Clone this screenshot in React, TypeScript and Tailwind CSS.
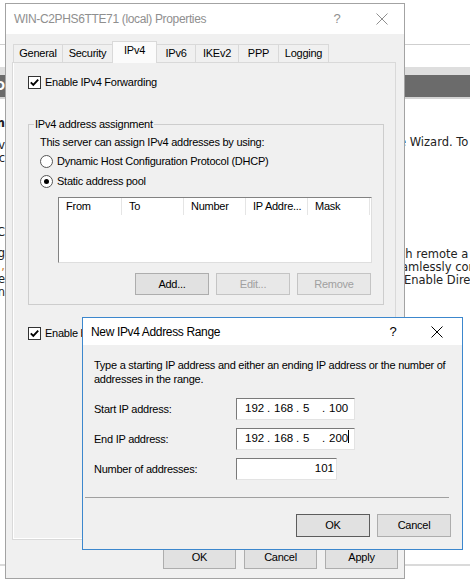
const ui = "font-['Liberation_Sans',Arial,sans-serif] text-[11px] tracking-[-0.25px]";

function CloseGlyph({ color }: { color: string }) {
  return (
    <svg width="12" height="12" viewBox="0 0 12 12" className="shrink-0">
      <path d="M0.5 0.5L11.5 11.5M11.5 0.5L0.5 11.5" stroke={color} strokeWidth="1" fill="none" />
    </svg>
  );
}

function CheckBox() {
  return (
    <span className="w-[13px] h-[13px] shrink-0 border border-[#333333] bg-white flex items-center justify-center">
      <svg width="9" height="9" viewBox="0 0 9 9">
        <path d="M0.8 4.3L3.3 6.8L8.2 1.6" stroke="#000" strokeWidth="1.9" fill="none" />
      </svg>
    </span>
  );
}

function Radio({ on }: { on?: boolean }) {
  return (
    <span className="w-[13px] h-[13px] shrink-0 rounded-full border border-[#555555] bg-white flex items-center justify-center">
      {on && <span className="w-[5px] h-[5px] rounded-full bg-black" />}
    </span>
  );
}

function Btn({ label, className }: { label: string; className: string }) {
  return <div className={`flex items-center justify-center border ${className}`}>{label}</div>;
}

function Backdrop() {
  return (
    <div className="font-['DejaVu_Sans',Verdana,sans-serif] text-[11.5px] tracking-normal text-[#222222]">
      <div className="h-[44px]" />
      <div className="h-px bg-[#cfcfcf]" />
      <div className="h-[22px]" />
      <div className="h-[8px] bg-[#dedede]" />
      <div className="h-[22px] bg-[#6b6b6b] flex justify-start">
        <span className="w-[5px] overflow-hidden flex justify-end text-white font-bold leading-[22px]">
          <span className="whitespace-nowrap">D</span>
        </span>
      </div>
      <div className="h-[2px] bg-[#d4d4d4]" />
      <div className="h-[465px] flex justify-between leading-[13px]">
        <div className="w-[5px] overflow-hidden">
          <div className="mt-[18px] flex justify-end font-bold text-[12px]">
            <span className="whitespace-nowrap">Welcom</span>
          </div>
          <div className="mt-[9px] flex justify-end">
            <span className="whitespace-nowrap">Alreadv</span>
          </div>
          <div className="flex justify-end">
            <span className="whitespace-nowrap">Servec</span>
          </div>
          <div className="mt-[61px] flex justify-end">
            <span className="whitespace-nowrap">DirectC</span>
          </div>
          <div className="mt-[8px] flex justify-end">
            <span className="whitespace-nowrap">Usingg</span>
          </div>
          <div className="flex justify-end text-[#d07a2a]">
            <span className="whitespace-nowrap">,</span>
          </div>
          <div className="flex justify-end">
            <span className="whitespace-nowrap">thee</span>
          </div>
          <div className="flex justify-end">
            <span className="whitespace-nowrap">whn</span>
          </div>
        </div>
        <div className="w-[65px] overflow-hidden whitespace-nowrap">
          <div className="mt-[37px] ml-[-6px]">e Wizard. To</div>
          <div className="mt-[99px] ml-[-6px]">ch remote a</div>
          <div className="ml-[-4px]">amlessly cor</div>
          <div className="ml-[-1px]">Enable Direc</div>
        </div>
      </div>
      <div className="h-[2px] bg-[#dadada]" />
    </div>
  );
}

function PropertiesDialog() {
  const tab = "h-[18px] -ml-px border border-b-0 border-[#d9d9d9] bg-[#f0f0f0] flex items-center justify-center";
  const cols = [
    { label: "From", w: "w-[63px]" },
    { label: "To", w: "w-[62px]" },
    { label: "Number", w: "w-[62px]" },
    { label: "IP Addre...", w: "w-[62px]" },
    { label: "Mask", w: "w-[62px]" },
  ];
  return (
    <div className={`absolute left-[5px] top-[3px] w-[400px] h-[576px] border border-[#a3a3a3] bg-[#f0f0f0] text-black ${ui}`}>
      <div className="h-[30px] bg-white flex items-center pl-[8px] pr-[16px]">
        <span className="text-[12px] tracking-[-0.35px] text-[#8f8f8f]">WIN-C2PHS6TTE71 (local) Properties</span>
        <div className="ml-auto flex items-center gap-[32px]">
          <span className="w-[14px] text-center text-[13px] text-[#8f8f8f]">?</span>
          <CloseGlyph color="#8f8f8f" />
        </div>
      </div>

      <div className="mt-[7px] ml-[7px] h-[21px] flex items-end">
        <div className="h-[18px] w-[50px] border border-b-0 border-[#d9d9d9] bg-[#f0f0f0] flex items-center justify-center">General</div>
        <div className={`${tab} w-[51px]`}>Security</div>
        <div className="relative z-10 h-[22px] w-[45px] -ml-px -mb-px pb-[5px] border border-b-0 border-[#d9d9d9] bg-[#fbfbfb] flex items-center justify-center">IPv4</div>
        <div className={`${tab} w-[40px]`}>IPv6</div>
        <div className={`${tab} w-[44px]`}>IKEv2</div>
        <div className={`${tab} w-[41px]`}>PPP</div>
        <div className={`${tab} w-[51px]`}>Logging</div>
      </div>

      <div className="ml-[6px] w-[384px] h-[478px] border border-[#d9d9d9] bg-[#f0f0f0] shadow-[inset_1px_-1px_0_#ffffff]">
        <div className="ml-[15px] mt-[13px] h-[13px] flex items-center gap-[4px]">
          <CheckBox />
          <span>Enable IPv4 Forwarding</span>
        </div>

        <fieldset className="mt-[28px] ml-[15px] w-[356px] h-[188px] border border-[#cdcdcd]">
          <legend className="ml-[5px] px-[1px] leading-[14px]">IPv4 address assignment</legend>
          <div className="mt-[4px] ml-[11px] leading-[14px]">This server can assign IPv4 addresses by using:</div>
          <div className="mt-[5px] ml-[11px] h-[14px] flex items-center gap-[4px]">
            <Radio />
            <span>Dynamic Host Configuration Protocol (DHCP)</span>
          </div>
          <div className="mt-[6px] ml-[11px] h-[14px] flex items-center gap-[4px]">
            <Radio on />
            <span>Static address pool</span>
          </div>
          <div className="mt-[9px] ml-[29px] w-[314px] h-[66px] bg-white border border-t-[#828282] border-l-[#828282] border-r-[#dedede] border-b-[#dedede]">
            <div className="flex h-[17px]">
              {cols.map((c) => (
                <div key={c.label} className={`${c.w} border-r border-[#e5e5e5] pl-[7px] leading-[17px] whitespace-nowrap`}>
                  {c.label}
                </div>
              ))}
            </div>
          </div>
          <div className="mt-[10px] ml-[106px] flex gap-[7px]">
            <Btn label="Add..." className="w-[74px] h-[22px] bg-[#e1e1e1] border-[#adadad]" />
            <Btn label="Edit..." className="w-[74px] h-[22px] bg-[#e8e8e8] border-[#c4c4c4] text-[#a0a0a0]" />
            <Btn label="Remove" className="w-[74px] h-[22px] bg-[#e8e8e8] border-[#c4c4c4] text-[#a0a0a0]" />
          </div>
        </fieldset>

        <div className="ml-[15px] mt-[22px] h-[13px] flex items-center gap-[4px]">
          <CheckBox />
          <span>Enable broadcast name resolution</span>
        </div>
      </div>

      <div className="mt-[6px] pr-[6px] flex justify-end gap-[8px]">
        <Btn label="OK" className="w-[73px] h-[23px] bg-[#e1e1e1] border-[#adadad]" />
        <Btn label="Cancel" className="w-[73px] h-[23px] bg-[#e1e1e1] border-[#adadad]" />
        <Btn label="Apply" className="w-[73px] h-[23px] bg-[#e1e1e1] border-[#adadad]" />
      </div>
    </div>
  );
}

function IpField({ last, caret }: { last: string; caret?: boolean }) {
  return (
    <div className="w-[119px] h-[22px] bg-white border border-t-[#7a7a7a] border-l-[#7a7a7a] border-r-[#e3e3e3] border-b-[#e3e3e3] pl-[8px] flex items-center text-[11.5px] tracking-normal whitespace-nowrap">
      <span className="w-[22px]">192</span>
      <span className="w-[7px]">.</span>
      <span className="w-[22px]">168</span>
      <span className="w-[7px]">.</span>
      <span className="w-[19px]">5</span>
      <span className="w-[7px]">.</span>
      <span>{last}</span>
      {caret && <span className="w-px h-[13px] mb-[6px] bg-black" />}
    </div>
  );
}

function RangeDialog() {
  return (
    <div className={`absolute left-[82px] top-[317px] w-[381px] h-[233px] border border-[#3c87cd] bg-[#f0f0f0] text-black ${ui}`}>
      <div className="h-[27px] bg-white flex items-center pl-[8px] pr-[19px]">
        <span className="text-[12px] tracking-[-0.35px]">New IPv4 Address Range</span>
        <div className="ml-auto flex items-center gap-[31px]">
          <span className="w-[14px] text-center text-[13px]">?</span>
          <CloseGlyph color="#000000" />
        </div>
      </div>

      <div className="pl-[11px]">
        <div className="mt-[13px] leading-[14px] whitespace-nowrap">
          <div>Type a starting IP address and either an ending IP address or the number of</div>
          <div>addresses in the range.</div>
        </div>
        <div className="mt-[12px] h-[22px] flex items-center">
          <span className="w-[142px]">Start IP address:</span>
          <IpField last="100" />
        </div>
        <div className="mt-[8px] h-[22px] flex items-center">
          <span className="w-[142px]">End IP address:</span>
          <IpField last="200" caret />
        </div>
        <div className="mt-[8px] h-[22px] flex items-center">
          <span className="w-[142px]">Number of addresses:</span>
          <div className="w-[101px] h-[22px] bg-white border border-t-[#7a7a7a] border-l-[#7a7a7a] border-r-[#e3e3e3] border-b-[#e3e3e3] pr-[2px] flex items-center justify-end text-[11.5px] tracking-normal">
            101
          </div>
        </div>
      </div>

      <div className="mt-[17px] ml-[2px] w-[364px] h-px bg-[#a0a0a0]" />

      <div className="mt-[16px] pr-[11px] flex justify-end gap-[7px]">
        <Btn label="OK" className="w-[74px] h-[23px] bg-[#e1e1e1] border-[#5c5c5c]" />
        <Btn label="Cancel" className="w-[74px] h-[23px] bg-[#e1e1e1] border-[#adadad]" />
      </div>
    </div>
  );
}

export default function App() {
  return (
    <div className="relative w-[470px] h-[586px] overflow-hidden bg-white">
      <Backdrop />
      <PropertiesDialog />
      <RangeDialog />
    </div>
  );
}
